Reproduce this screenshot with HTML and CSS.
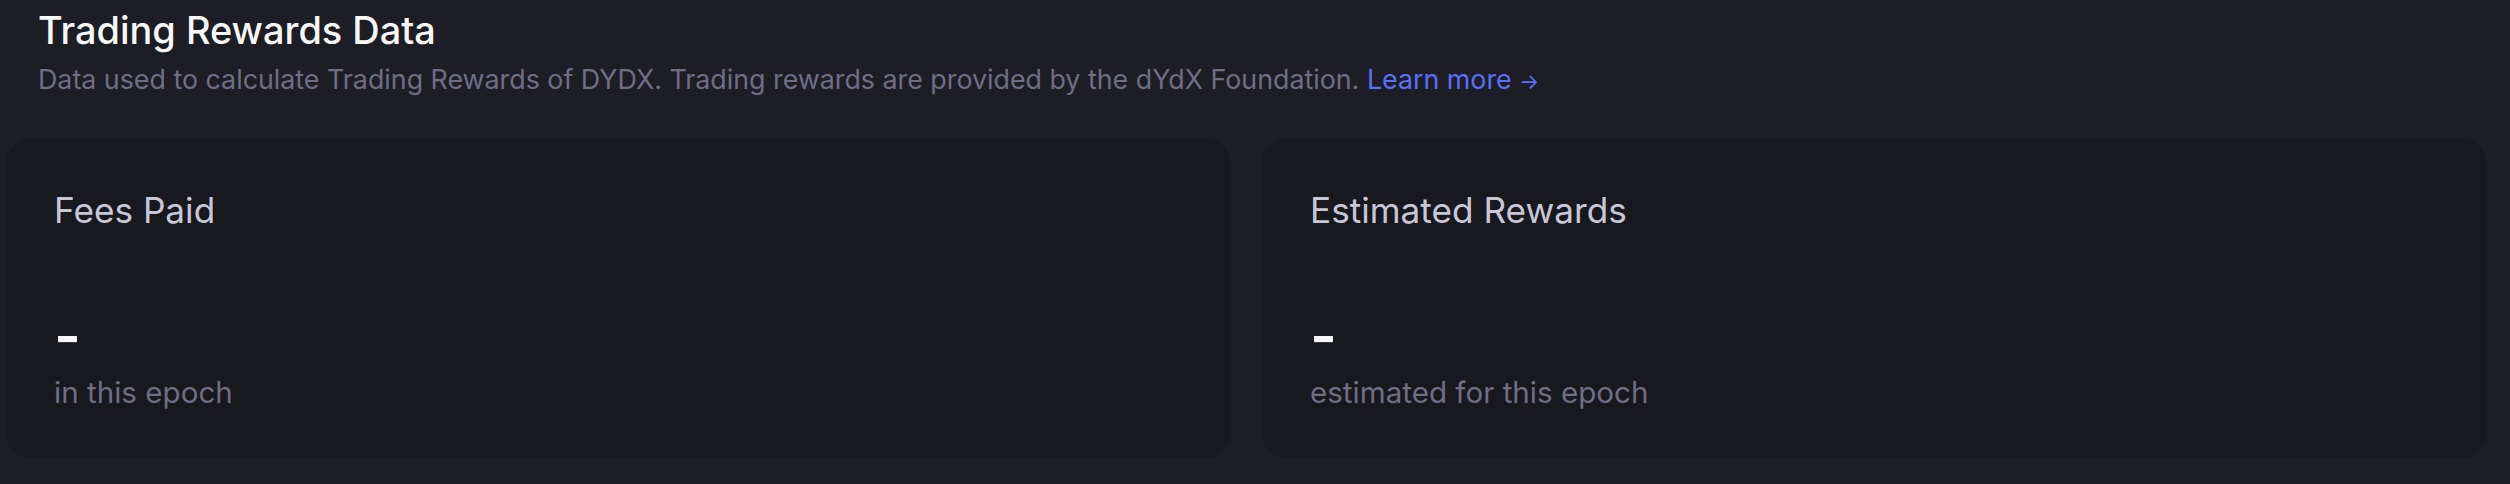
FILE: index.html
```html
<!DOCTYPE html>
<html lang="en">
<head>
<meta charset="utf-8">
<title>Trading Rewards Data</title>
<link rel="stylesheet" href="styles.css">
</head>
<body>
<section class="rewards">
  <header class="rewards-header">
    <h2 class="rewards-title">Trading Rewards Data</h2>
    <p class="rewards-subtitle">Data used to calculate Trading Rewards of DYDX. Trading rewards are provided by the dYdX Foundation. <a class="learn-more" href="#">Learn more <span class="arrow">→</span></a></p>
  </header>
  <div class="cards">
    <div class="card">
      <div class="card-title">Fees Paid</div>
      <div class="card-body">
        <div class="card-value">-</div>
        <div class="card-label">in this epoch</div>
      </div>
    </div>
    <div class="card">
      <div class="card-title">Estimated Rewards</div>
      <div class="card-body">
        <div class="card-value">-</div>
        <div class="card-label">estimated for this epoch</div>
      </div>
    </div>
  </div>
</section>
</body>
</html>
```
FILE: styles.css
```css
html, body {
  margin: 0;
  padding: 0;
  background: #1d1d26;
}

body {
  font-family: Inter, "Noto Sans", sans-serif;
  color: #f7f7f7;
  width: 2510px;
  height: 484px;
  overflow: hidden;
}

.rewards {
  display: flex;
  flex-direction: column;
  padding: 8px 24px 0 6px;
}

.rewards-header {
  display: flex;
  flex-direction: column;
  padding: 0 32px;
  gap: 10px;
}

.rewards-title {
  margin: 0;
  font-size: 37.9px;
  font-weight: 500;
  line-height: 44px;
  color: #f7f7f7;
}

.rewards-subtitle {
  margin: 0;
  font-size: 26.8px;
  line-height: 34px;
  color: #6f6e84;
}

.learn-more {
  color: #5c6ff7;
  text-decoration: none;
}

.arrow {
  font-size: 21px;
}

.cards {
  display: grid;
  grid-template-columns: 1fr 1fr;
  gap: 32px;
  margin-top: 40px;
}

.card {
  background: #18181f;
  border-radius: 24px;
  height: 319px;
  box-sizing: border-box;
  padding: 51px 48px 48px;
  display: flex;
  flex-direction: column;
  justify-content: space-between;
}

.card-title {
  font-size: 35.2px;
  line-height: 40px;
  color: #c8c7d8;
}

.card-body {
  display: flex;
  flex-direction: column;
  gap: 18px;
}

.card-value {
  font-size: 58px;
  font-weight: 600;
  line-height: 40px;
  color: #f7f7f7;
}

.card-label {
  font-size: 29.6px;
  line-height: 36px;
  color: #6f6e84;
}
```
